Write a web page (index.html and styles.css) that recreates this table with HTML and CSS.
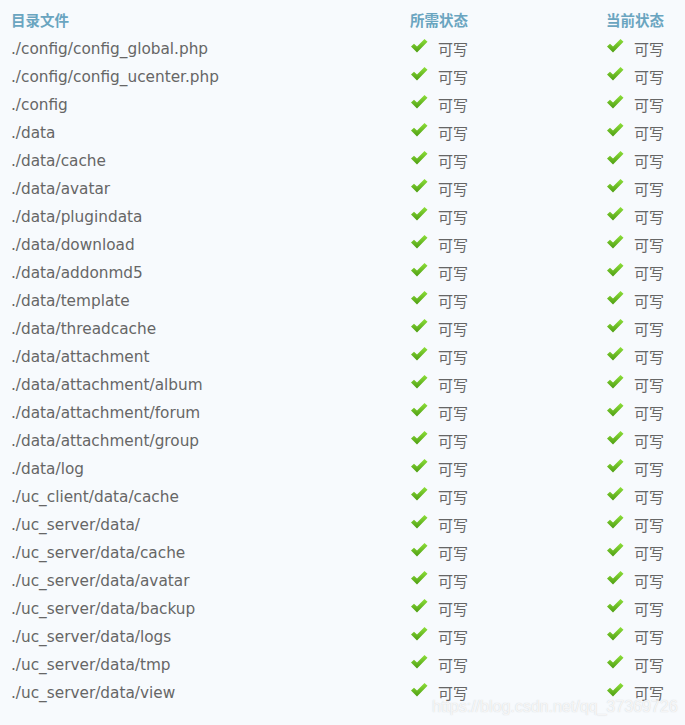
FILE: index.html
```html
<!DOCTYPE html>
<html lang="zh-CN">
<head>
    <meta charset="UTF-8">
    <title>目录文件权限检查</title>
    <link rel="stylesheet" href="styles.css">
</head>
<body>
    <div class="check-table">
        <div class="row head">
            <div class="cell">目录文件</div>
            <div class="cell">所需状态</div>
            <div class="cell">当前状态</div>
        </div>
    </div>
    <div class="watermark">https://blog.csdn.net/qq_37369726</div>

    <svg width="0" height="0" class="defs">
        <defs>
            <linearGradient id="tick-grad" x1="0" y1="0" x2="0" y2="1">
                <stop offset="0" stop-color="#8ee03a"/>
                <stop offset="1" stop-color="#4e9e12"/>
            </linearGradient>
            <symbol id="tick" viewBox="0 0 18 16">
                <path d="M1 8.5 L4 5.8 L7 8.6 L14.5 1 L17.5 3.8 L7 14.5 Z" fill="url(#tick-grad)"/>
            </symbol>
        </defs>
    </svg>

    <script>
        var dirs = [
            './config/config_global.php',
            './config/config_ucenter.php',
            './config',
            './data',
            './data/cache',
            './data/avatar',
            './data/plugindata',
            './data/download',
            './data/addonmd5',
            './data/template',
            './data/threadcache',
            './data/attachment',
            './data/attachment/album',
            './data/attachment/forum',
            './data/attachment/group',
            './data/log',
            './uc_client/data/cache',
            './uc_server/data/',
            './uc_server/data/cache',
            './uc_server/data/avatar',
            './uc_server/data/backup',
            './uc_server/data/logs',
            './uc_server/data/tmp',
            './uc_server/data/view'
        ];

        var status = '<span class="ok"><svg class="tick"><use href="#tick"/></svg>可写</span>';
        var table = document.querySelector('.check-table');

        dirs.forEach(function (dir) {
            var row = document.createElement('div');
            row.className = 'row';
            row.innerHTML = '<div class="cell">' + dir + '</div>' +
                '<div class="cell">' + status + '</div>' +
                '<div class="cell">' + status + '</div>';
            table.appendChild(row);
        });
    </script>
</body>
</html>
```

FILE: styles.css
```css
body {
    margin: 0;
    background-color: #f7fafd;
    font-family: "DejaVu Sans", Verdana, "Noto Sans CJK SC", sans-serif;
    color: #666;
    position: relative;
    height: 725px;
    overflow: hidden;
}

.defs {
    position: absolute;
}

.check-table {
    padding: 3px 0 0 11px;
}

.row {
    display: grid;
    grid-template-columns: 399px 196px 1fr;
    height: 28px;
    align-items: center;
    font-size: 15.3px;
}

.row.head {
    height: 32px;
    font-weight: bold;
    font-size: 14.5px;
    color: #6aa5c0;
}

.ok {
    display: flex;
    align-items: center;
    font-size: 15px;
    position: relative;
    top: -1px;
}

.tick {
    width: 18px;
    height: 16px;
    margin-right: 10px;
    position: relative;
    top: -2px;
}

.watermark {
    position: absolute;
    left: 432px;
    top: 698px;
    font-family: "Liberation Sans", Arial, sans-serif;
    font-size: 16px;
    color: rgba(255, 255, 255, 0.8);
    text-shadow: 0 0 1px rgba(160, 160, 160, 0.5);
}
```
